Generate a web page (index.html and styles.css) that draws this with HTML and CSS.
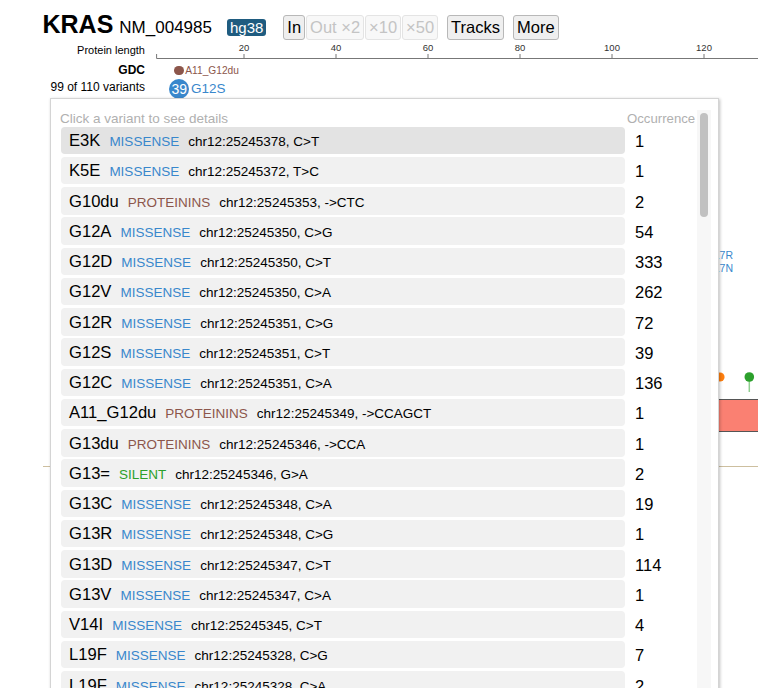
FILE: index.html
```html
<!DOCTYPE html>
<html lang="en">
<head>
<meta charset="utf-8">
<title>KRAS NM_004985</title>
<link rel="stylesheet" href="styles.css">
</head>
<body>
<div class="page">
  <header class="topbar">
    <span class="gene">KRAS</span>
    <span class="isoform">NM_004985</span>
    <span class="genome">hg38</span>
    <div class="zoomgroup">
      <button class="btn">In</button>
      <button class="btn disabled">Out ×2</button>
      <button class="btn disabled">×10</button>
      <button class="btn disabled">×50</button>
    </div>
    <button class="btn gapped">Tracks</button>
    <button class="btn">More</button>
  </header>

  <div class="legend">
    <div class="lab ruler-lab">Protein length</div>
    <svg class="ruler" width="613" height="22" viewBox="0 0 613 22">
      <line x1="11.6" y1="18.5" x2="613" y2="18.5" class="axis"/>
      <line x1="11.6" y1="14" x2="11.6" y2="18.5" class="axis"/>
      <g class="ticks">
        <line x1="99" y1="14" x2="99" y2="18.5"/><line x1="191" y1="14" x2="191" y2="18.5"/>
        <line x1="283" y1="14" x2="283" y2="18.5"/><line x1="375" y1="14" x2="375" y2="18.5"/>
        <line x1="467" y1="14" x2="467" y2="18.5"/><line x1="559" y1="14" x2="559" y2="18.5"/>
      </g>
      <g class="ticklabels">
        <text x="99" y="10.7">20</text><text x="191" y="10.7">40</text>
        <text x="283" y="10.7">60</text><text x="375" y="10.7">80</text>
        <text x="467" y="10.7">100</text><text x="559" y="10.7">120</text>
      </g>
    </svg>

    <div class="lab bold">GDC</div>
    <div class="mark">
      <span class="dot ins"></span><span class="marktext ins-text">A11_G12du</span>
    </div>

    <div class="lab">99 of 110 variants</div>
    <div class="hit">
      <span class="bubble">39</span><span class="hittext">G12S</span>
    </div>
  </div>

  <svg class="track" width="758" height="589" viewBox="0 0 758 589">
    <text x="733" y="160" class="lolli-label">K117R</text>
    <text x="733" y="173" class="lolli-label">K117N</text>
    <circle cx="720" cy="278" r="4.6" fill="#ff7f0e"/>
    <line x1="749.3" y1="282" x2="749.3" y2="293" stroke="#8fcf8f" stroke-width="1.5"/>
    <circle cx="749.3" cy="278" r="4.8" fill="#2ca02c"/>
    <rect x="60" y="300.5" width="720" height="32" fill="#fa8072" stroke="#555" stroke-width="1"/>
    <line x1="43" y1="367.5" x2="758" y2="367.5" stroke="#cdbf9f" stroke-width="1"/>
  </svg>

  <div class="panel">
    <div class="list">
      <div class="listhead">
        <span class="hint">Click a variant to see details</span>
        <span class="occhead">Occurrence</span>
      </div>
      <div class="vrow"><div class="vcell hover"><span class="vname">E3K</span><span class="vclass missense">MISSENSE</span><span class="vpos">chr12:25245378, C&gt;T</span></div><div class="vocc">1</div></div>
      <div class="vrow"><div class="vcell"><span class="vname">K5E</span><span class="vclass missense">MISSENSE</span><span class="vpos">chr12:25245372, T&gt;C</span></div><div class="vocc">1</div></div>
      <div class="vrow"><div class="vcell"><span class="vname">G10du</span><span class="vclass proteinins">PROTEININS</span><span class="vpos">chr12:25245353, -&gt;CTC</span></div><div class="vocc">2</div></div>
      <div class="vrow"><div class="vcell"><span class="vname">G12A</span><span class="vclass missense">MISSENSE</span><span class="vpos">chr12:25245350, C&gt;G</span></div><div class="vocc">54</div></div>
      <div class="vrow"><div class="vcell"><span class="vname">G12D</span><span class="vclass missense">MISSENSE</span><span class="vpos">chr12:25245350, C&gt;T</span></div><div class="vocc">333</div></div>
      <div class="vrow"><div class="vcell"><span class="vname">G12V</span><span class="vclass missense">MISSENSE</span><span class="vpos">chr12:25245350, C&gt;A</span></div><div class="vocc">262</div></div>
      <div class="vrow"><div class="vcell"><span class="vname">G12R</span><span class="vclass missense">MISSENSE</span><span class="vpos">chr12:25245351, C&gt;G</span></div><div class="vocc">72</div></div>
      <div class="vrow"><div class="vcell"><span class="vname">G12S</span><span class="vclass missense">MISSENSE</span><span class="vpos">chr12:25245351, C&gt;T</span></div><div class="vocc">39</div></div>
      <div class="vrow"><div class="vcell"><span class="vname">G12C</span><span class="vclass missense">MISSENSE</span><span class="vpos">chr12:25245351, C&gt;A</span></div><div class="vocc">136</div></div>
      <div class="vrow"><div class="vcell"><span class="vname">A11_G12du</span><span class="vclass proteinins">PROTEININS</span><span class="vpos">chr12:25245349, -&gt;CCAGCT</span></div><div class="vocc">1</div></div>
      <div class="vrow"><div class="vcell"><span class="vname">G13du</span><span class="vclass proteinins">PROTEININS</span><span class="vpos">chr12:25245346, -&gt;CCA</span></div><div class="vocc">1</div></div>
      <div class="vrow"><div class="vcell"><span class="vname">G13=</span><span class="vclass silent">SILENT</span><span class="vpos">chr12:25245346, G&gt;A</span></div><div class="vocc">2</div></div>
      <div class="vrow"><div class="vcell"><span class="vname">G13C</span><span class="vclass missense">MISSENSE</span><span class="vpos">chr12:25245348, C&gt;A</span></div><div class="vocc">19</div></div>
      <div class="vrow"><div class="vcell"><span class="vname">G13R</span><span class="vclass missense">MISSENSE</span><span class="vpos">chr12:25245348, C&gt;G</span></div><div class="vocc">1</div></div>
      <div class="vrow"><div class="vcell"><span class="vname">G13D</span><span class="vclass missense">MISSENSE</span><span class="vpos">chr12:25245347, C&gt;T</span></div><div class="vocc">114</div></div>
      <div class="vrow"><div class="vcell"><span class="vname">G13V</span><span class="vclass missense">MISSENSE</span><span class="vpos">chr12:25245347, C&gt;A</span></div><div class="vocc">1</div></div>
      <div class="vrow"><div class="vcell"><span class="vname">V14I</span><span class="vclass missense">MISSENSE</span><span class="vpos">chr12:25245345, C&gt;T</span></div><div class="vocc">4</div></div>
      <div class="vrow"><div class="vcell"><span class="vname">L19F</span><span class="vclass missense">MISSENSE</span><span class="vpos">chr12:25245328, C&gt;G</span></div><div class="vocc">7</div></div>
      <div class="vrow"><div class="vcell"><span class="vname">L19F</span><span class="vclass missense">MISSENSE</span><span class="vpos">chr12:25245328, C&gt;A</span></div><div class="vocc">2</div></div>
    </div>
    <div class="scrollbar"><div class="thumb"></div></div>
  </div>
</div>
</body>
</html>
```

FILE: styles.css
```css
html, body {
  margin: 0;
  padding: 0;
  background: #fff;
  overflow: hidden;
}
body {
  font-family: "Liberation Sans", Arial, sans-serif;
  color: #000;
}
.page {
  position: relative;
  width: 758px;
  height: 688px;
  overflow: hidden;
}

/* header */
.topbar {
  display: flex;
  align-items: baseline;
  height: 40px;
  box-sizing: border-box;
  padding: 12px 0 0 42.5px;
}
.gene {
  font-size: 25px;
  line-height: 25px;
  font-weight: bold;
  margin-right: 6px;
}
.isoform {
  font-size: 17px;
  margin-right: 15px;
}
.genome {
  font-size: 15px;
  line-height: 17px;
  padding: 0 3px;
  color: #fff;
  background: #1f5c80;
  border-radius: 3px;
  margin-right: 17px;
}
.zoomgroup {
  display: flex;
  align-items: baseline;
  gap: 1px;
  margin-right: 9px;
}
.btn {
  font-family: "Liberation Sans", Arial, sans-serif;
  font-size: 16.5px;
  line-height: 21px;
  padding: 1px 3px;
  margin: 0;
  border: 1px solid #b8b8b8;
  border-radius: 3px;
  background: #efefef;
  color: #000;
}
.btn.disabled {
  color: #c4c4c4;
  border-color: #e4e4e4;
  background: #f8f8f8;
}
.btn.gapped {
  margin-right: 9px;
}

/* legend rows */
.legend {
  display: grid;
  grid-template-columns: 145px 613px;
  grid-template-rows: 22px 17px 20px;
}
.lab {
  text-align: right;
  font-size: 12px;
  line-height: 17px;
  color: #000;
  white-space: nowrap;
}
.ruler-lab {
  font-size: 11px;
  line-height: 20px;
}
.lab.bold {
  font-weight: bold;
}
.ruler .axis,
.ruler .ticks line {
  stroke: #777;
  stroke-width: 1;
}
.ruler .ticklabels text {
  font-family: "Liberation Sans", Arial, sans-serif;
  font-size: 9.5px;
  fill: #333;
  text-anchor: middle;
}
.mark {
  display: flex;
  align-items: center;
  padding-left: 29.4px;
}
.dot {
  width: 9.4px;
  height: 9.4px;
  border-radius: 50%;
}
.dot.ins {
  background: #8c564b;
}
.marktext {
  font-size: 10.2px;
  margin-left: 1.5px;
}
.ins-text {
  color: #8c564b;
}
.hit {
  display: flex;
  align-items: center;
  padding-left: 24.3px;
}
.bubble {
  width: 20px;
  height: 20px;
  border-radius: 50%;
  background: #3987cc;
  color: #fff;
  font-size: 14px;
  line-height: 20px;
  text-align: center;
}
.hittext {
  color: #3987cc;
  font-size: 13.5px;
  margin-left: 1.7px;
  padding-bottom: 2px;
}

/* background track */
.track {
  display: block;
}
.lolli-label {
  font-family: "Liberation Sans", Arial, sans-serif;
  font-size: 10.5px;
  fill: #3987cc;
  text-anchor: end;
}

/* variant popup */
.panel {
  position: absolute;
  left: 50px;
  top: 98px;
  width: 669px;
  height: 620px;
  box-sizing: border-box;
  padding: 10.7px 0 0 10px;
  display: flex;
  align-items: flex-start;
  background: #fff;
  border: 1px solid #d4d4d4;
  box-shadow: 1px 1px 3px rgba(0, 0, 0, 0.25);
  overflow: hidden;
}
.list {
  width: 636px;
}
.listhead {
  display: flex;
  height: 17px;
  line-height: 17px;
  color: #b0b0b0;
}
.hint {
  width: 566px;
  font-size: 13.5px;
  margin-left: -1px;
}
.occhead {
  font-size: 13.2px;
  margin-left: 1px;
}
.vrow {
  display: flex;
  margin-bottom: 2.75px;
}
.vcell {
  width: 564px;
  height: 27.5px;
  box-sizing: border-box;
  padding: 1.5px 0 0 8px;
  line-height: 26px;
  font-size: 16.6px;
  background: #f1f1f1;
  border-radius: 4px;
  white-space: nowrap;
  overflow: hidden;
}
.vcell.hover {
  background: #e3e3e3;
}
.vname {
  margin-right: 9px;
}
.vclass {
  font-size: 13.5px;
  margin-right: 9px;
}
.vpos {
  font-size: 13.5px;
}
.missense { color: #3987cc; }
.proteinins { color: #8c564b; }
.silent { color: #2ca02c; }
.vocc {
  width: 70px;
  margin-left: 2px;
  box-sizing: border-box;
  padding: 1.5px 0 0 8px;
  line-height: 26px;
  font-size: 16.5px;
}
.scrollbar {
  width: 14px;
  align-self: stretch;
  background: #f7f7f7;
  box-sizing: border-box;
  padding: 3px 3px 0 3px;
}
.thumb {
  width: 8px;
  height: 104px;
  border-radius: 4px;
  background: #c1c1c1;
}
```
